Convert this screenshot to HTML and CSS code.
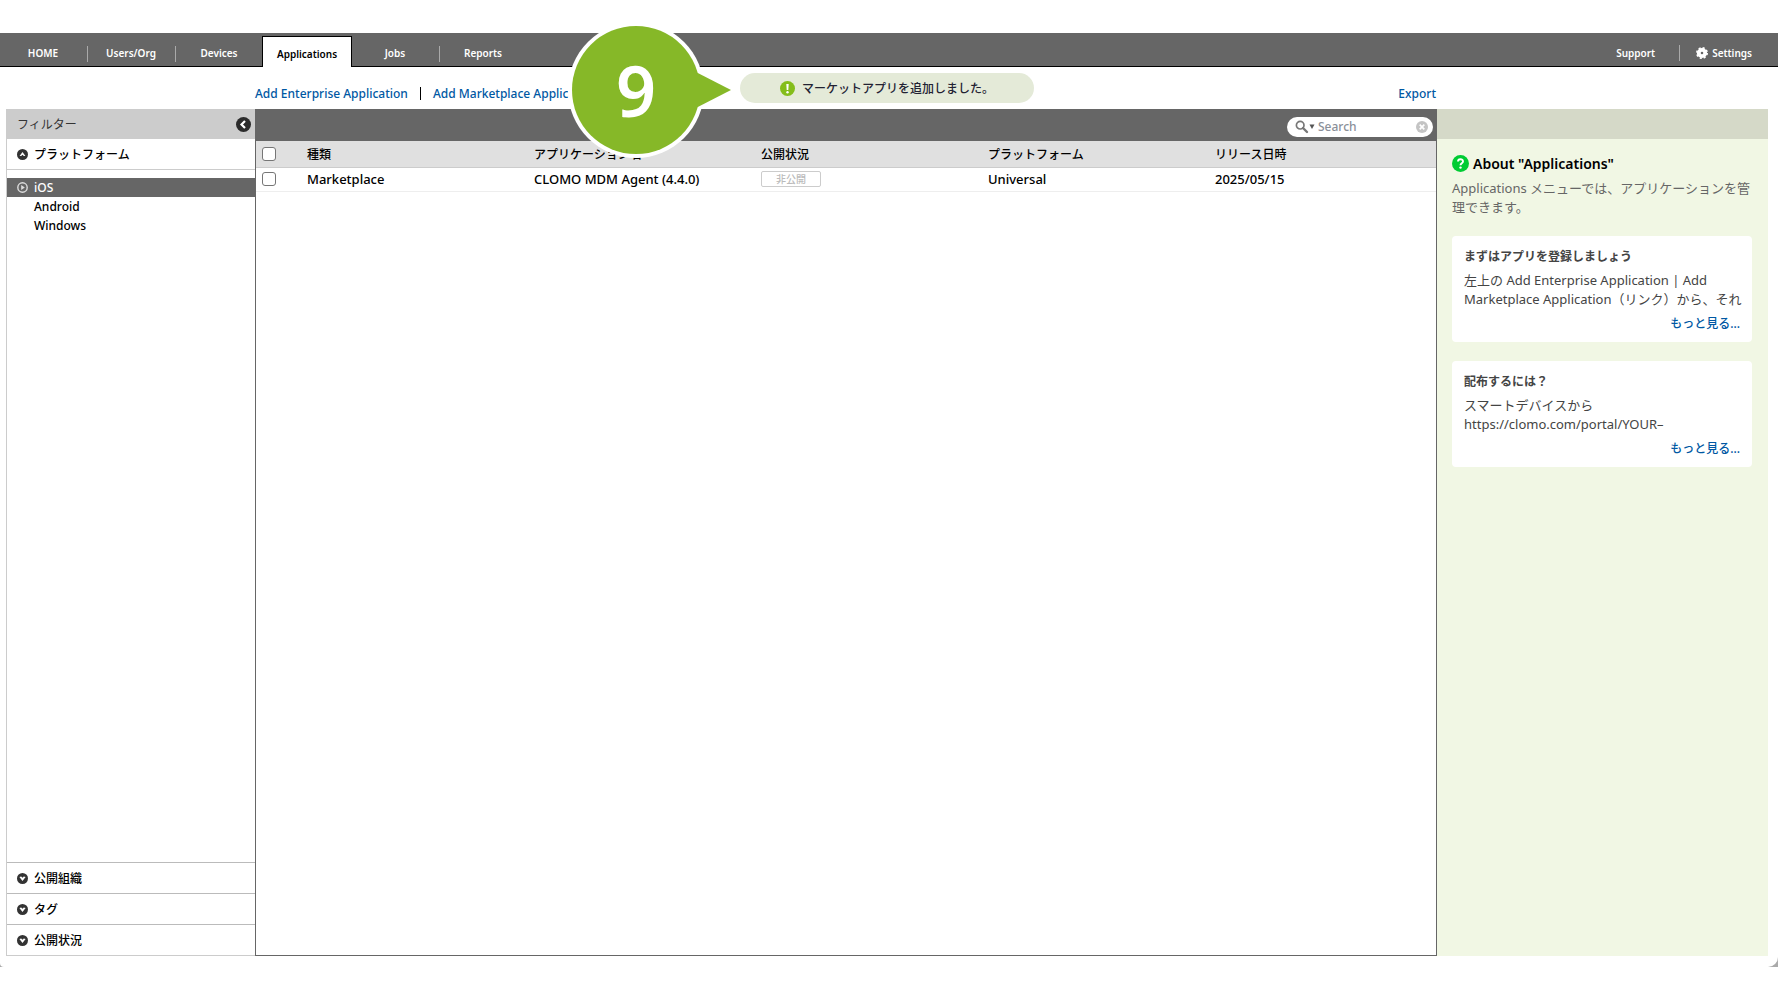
FILE: index.html
```
<!DOCTYPE html>
<html lang="ja">
<head>
    <meta charset="UTF-8">
    <meta name="viewport" content="width=device-width, initial-scale=1.0">
    <title>Applications</title>
    <link rel="stylesheet" href="styles.css">
</head>
<body>
    <div class="frame">
        <div class="window">
            <header class="topbar">
                <nav class="tabs">
                    <a href="#">HOME</a>
                    <a href="#">Users/Org</a>
                    <a href="#">Devices</a>
                    <a href="#" class="active">Applications</a>
                    <a href="#">Jobs</a>
                    <a href="#">Reports</a>
                </nav>
                <nav class="tools">
                    <a href="#">Support</a>
                    <a href="#" class="settings">
                        <svg width="12" height="12" viewBox="0 0 12 12">
                            <circle cx="6" cy="6" r="3.2" fill="none" stroke="#fff" stroke-width="3.8"/>
                            <circle cx="6" cy="6" r="5.2" fill="none" stroke="#fff" stroke-width="1.6" stroke-dasharray="2.1 1.98"/>
                        </svg>
                        Settings
                    </a>
                </nav>
            </header>

            <div class="actions">
                <div class="links">
                    <a href="#">Add Enterprise Application</a>
                    <span class="divider"></span>
                    <a href="#">Add Marketplace Application</a>
                </div>
                <a href="#">Export</a>
            </div>

            <div class="content">
                <aside class="filter">
                    <div class="filter-head">
                        <span>フィルター</span>
                        <button type="button" class="collapse" aria-label="閉じる">
                            <svg width="15" height="15" viewBox="0 0 15 15">
                                <circle cx="7.5" cy="7.5" r="7.5" fill="#2b2b2b"/>
                                <path d="M9 4L5.5 7.5L9 11" fill="none" stroke="#fff" stroke-width="2.2"/>
                            </svg>
                        </button>
                    </div>
                    <button type="button" class="section open">
                        <svg width="11" height="11" viewBox="0 0 11 11">
                            <circle cx="5.5" cy="5.5" r="5.5" fill="#333"/>
                            <path d="M2.6 7L5.5 3L8.4 7L6.8 7L5.5 5.8L4.2 7Z" fill="#fff"/>
                        </svg>
                        プラットフォーム
                    </button>
                    <ul class="platforms">
                        <li class="selected">
                            <a href="#">
                                <svg width="11" height="11" viewBox="0 0 11 11">
                                    <circle cx="5.5" cy="5.5" r="4.7" fill="none" stroke="#ddd" stroke-width="1.4"/>
                                    <path d="M4.2 3L7.8 5.5L4.2 8Z" fill="#ddd"/>
                                </svg>
                                iOS
                            </a>
                        </li>
                        <li><a href="#">Android</a></li>
                        <li><a href="#">Windows</a></li>
                    </ul>
                    <button type="button" class="section">
                        <svg width="11" height="11" viewBox="0 0 11 11">
                            <circle cx="5.5" cy="5.5" r="5.5" fill="#333"/>
                            <path d="M2.4 4L4.2 3.6L5.5 4.8L6.8 3.6L8.6 4L5.5 8Z" fill="#fff"/>
                        </svg>
                        公開組織
                    </button>
                    <button type="button" class="section">
                        <svg width="11" height="11" viewBox="0 0 11 11">
                            <circle cx="5.5" cy="5.5" r="5.5" fill="#333"/>
                            <path d="M2.4 4L4.2 3.6L5.5 4.8L6.8 3.6L8.6 4L5.5 8Z" fill="#fff"/>
                        </svg>
                        タグ
                    </button>
                    <button type="button" class="section">
                        <svg width="11" height="11" viewBox="0 0 11 11">
                            <circle cx="5.5" cy="5.5" r="5.5" fill="#333"/>
                            <path d="M2.4 4L4.2 3.6L5.5 4.8L6.8 3.6L8.6 4L5.5 8Z" fill="#fff"/>
                        </svg>
                        公開状況
                    </button>
                </aside>

                <main class="list">
                    <div class="list-bar">
                        <div class="search">
                            <svg width="20" height="14" viewBox="0 0 20 14">
                                <circle cx="5.2" cy="5.2" r="3.8" fill="none" stroke="#777" stroke-width="1.7"/>
                                <path d="M8 8L12 12" stroke="#777" stroke-width="2.4" stroke-linecap="round"/>
                                <path d="M14.5 4.5H19.5L17 9Z" fill="#555"/>
                            </svg>
                            <input type="text" placeholder="Search" aria-label="Search">
                            <button type="button" aria-label="Clear">
                                <svg width="12" height="12" viewBox="0 0 12 12">
                                    <circle cx="6" cy="6" r="6" fill="#c4c4c4"/>
                                    <path d="M3.7 3.7L8.3 8.3M8.3 3.7L3.7 8.3" stroke="#fff" stroke-width="1.7"/>
                                </svg>
                            </button>
                        </div>
                    </div>
                    <table>
                        <thead>
                            <tr>
                                <th class="check"><input type="checkbox" aria-label="すべて選択"></th>
                                <th class="col">種類</th>
                                <th class="col">アプリケーション名</th>
                                <th class="col">公開状況</th>
                                <th class="col">プラットフォーム</th>
                                <th>リリース日時</th>
                            </tr>
                        </thead>
                        <tbody>
                            <tr>
                                <td class="check"><input type="checkbox" aria-label="CLOMO MDM Agent"></td>
                                <td>Marketplace</td>
                                <td>CLOMO MDM Agent (4.4.0)</td>
                                <td><span class="status">非公開</span></td>
                                <td>Universal</td>
                                <td>2025/05/15</td>
                            </tr>
                        </tbody>
                    </table>
                </main>

                <aside class="help">
                    <div class="help-head"></div>
                    <div class="help-body">
                        <h2>
                            <svg width="17" height="17" viewBox="0 0 17 17">
                                <circle cx="8.5" cy="8.5" r="8.5" fill="#0c3"/>
                                <path d="M6 6.6C6 3.4 11 3.5 11 6.4C11 8.3 8.5 8.2 8.5 10.2" fill="none" stroke="#fff" stroke-width="1.9"/>
                                <circle cx="8.5" cy="12.6" r="1.2" fill="#fff"/>
                            </svg>
                            About "Applications"
                        </h2>
                        <p class="lead">Applications メニューでは、アプリケーションを管理できます。</p>
                        <section class="card">
                            <h3>まずはアプリを登録しましょう</h3>
                            <p>左上の Add Enterprise Application | Add<br>Marketplace Application（リンク）から、それ</p>
                            <a href="#">もっと見る...</a>
                        </section>
                        <section class="card">
                            <h3>配布するには？</h3>
                            <p>スマートデバイスから<br>https://clomo.com/portal/YOUR–</p>
                            <a href="#">もっと見る...</a>
                        </section>
                    </div>
                </aside>
            </div>

            <div class="toast" role="status">
                <svg width="15" height="15" viewBox="0 0 15 15">
                    <circle cx="7.5" cy="7.5" r="7.5" fill="#84bd1b"/>
                    <path d="M6.3 3H8.7L8.3 9H6.7Z" fill="#fff"/>
                    <circle cx="7.5" cy="11.2" r="1.2" fill="#fff"/>
                </svg>
                マーケットアプリを追加しました。
            </div>

            <div class="step">
                <svg width="168" height="136" viewBox="0 0 168 136">
                    <circle cx="68" cy="68" r="68" fill="#fff"/>
                    <path d="M120 46L160 68L120 90Z" fill="#fff" stroke="#fff" stroke-width="6"/>
                    <circle cx="68" cy="68" r="64" fill="#86b828"/>
                    <path d="M122 47L163 68L122 89Z" fill="#86b828"/>
                </svg>
                <span>9</span>
            </div>
        </div>
    </div>
</body>
</html>
```
FILE: styles.css
```
* {
    box-sizing: border-box;
}

body {
    margin: 0;
    min-height: 100vh;
    padding: 33px 0;
    display: flex;
    background: #fff;
    color: #000;
    font-family: "Noto Sans", "Noto Sans CJK JP", sans-serif;
    font-size: 12px;
    font-weight: 500;
}

a {
    color: #0058a3;
    text-decoration: none;
}

button {
    padding: 0;
    border: none;
    background: none;
    color: inherit;
    font: inherit;
    cursor: pointer;
}

svg {
    display: block;
    flex: none;
}

.frame {
    flex: 1;
    display: flex;
    min-width: 0;
    background: linear-gradient(#fff 50%, #aaa 50%);
}

.window {
    position: relative;
    flex: 1;
    display: flex;
    flex-direction: column;
    min-width: 0;
    padding-bottom: 11px;
    background: #fff;
    border-radius: 0 0 10px 4px;
}

/* Top navigation */
.topbar {
    display: flex;
    justify-content: space-between;
    height: 34px;
    background: #666;
    border-bottom: 1px solid #000;
    font-size: 10px;
    font-weight: 600;
    line-height: 16px;
}

.topbar a {
    color: #fff;
}

.tabs {
    display: flex;
    padding-top: 3px;
}

.tabs a {
    width: 88px;
    height: 31px;
    padding: 9px 2px 0 0;
    text-align: center;
    background: linear-gradient(#aaa, #aaa) right 10px / 1px 16px no-repeat;
}

.tabs a:nth-child(n+3):not(:nth-child(5)) {
    background: none;
}

.tabs .active {
    width: 90px;
    margin-left: -2px;
    padding-right: 0;
    border: 1px solid #000;
    border-bottom: none;
    background: #fff !important;
    color: #000;
}

.tools {
    display: flex;
    align-items: center;
    padding: 7px 26px 0 0;
}

.tools .settings {
    display: flex;
    align-items: center;
    gap: 4px;
    margin-left: 24px;
    padding-left: 16px;
    border-left: 1px solid #aaa;
}

/* Links over the list */
.actions {
    display: flex;
    justify-content: space-between;
    align-items: center;
    height: 42px;
    padding: 11px 342px 0 255px;
}

.links {
    display: flex;
    align-items: center;
}

.divider {
    width: 1px;
    height: 13px;
    margin: 0 12px;
    background: #000;
}

.content {
    flex: 1;
    display: flex;
    padding: 0 10px 0 6px;
}

/* Filter column */
.filter {
    display: flex;
    flex-direction: column;
    width: 249px;
    border: 1px solid #ccc;
    border-width: 0 0 1px 1px;
}

.filter-head {
    display: flex;
    justify-content: space-between;
    align-items: center;
    height: 30px;
    padding: 0 4px 0 10px;
    background: #ccc;
    color: #333;
    font-weight: 400;
}

.section {
    display: flex;
    align-items: center;
    gap: 6px;
    height: 31px;
    padding-left: 10px;
    border-top: 1px solid #bbb;
    text-align: left;
}

.section.open {
    border-top: none;
    border-bottom: 1px solid #ccc;
}

.platforms {
    flex: 1;
    margin: 0;
    padding: 8px 0 0;
    list-style: none;
    line-height: 19px;
}

.platforms a {
    display: flex;
    align-items: center;
    gap: 6px;
    padding-left: 27px;
    color: #000;
}

.platforms .selected a {
    padding-left: 10px;
    background: #666;
    color: #fff;
}

/* Application list */
.list {
    flex: 1;
    min-width: 0;
    border: 1px solid #666;
}

.list-bar {
    display: flex;
    justify-content: flex-end;
    align-items: center;
    height: 31px;
    padding: 2px 3px 0 0;
    background: #666;
}

.search {
    display: flex;
    align-items: center;
    width: 146px;
    height: 20px;
    padding: 0 5px 0 8px;
    border-radius: 10px;
    background: #fff;
}

.search input {
    flex: 1;
    min-width: 0;
    padding: 0 3px;
    border: none;
    outline: none;
    background: none;
    font: inherit;
}

.search input::placeholder {
    color: #8a8f99;
}

table {
    width: 100%;
    table-layout: fixed;
    border-collapse: collapse;
}

th, td {
    padding: 0;
    text-align: left;
    font-weight: 500;
}

th {
    height: 26px;
    background: #e0e0e0;
    border-bottom: 1px solid #ccc;
}

td {
    height: 24px;
    border-bottom: 1px solid #eee;
    font-size: 13px;
    line-height: 16px;
}

.col {
    width: 227px;
}

.check {
    width: 51px;
    padding-left: 6px;
}

.check input {
    display: block;
    appearance: none;
    width: 14px;
    height: 14px;
    margin: 0;
    border: 1px solid #767676;
    border-radius: 3px;
    background: #fff;
}

.status {
    display: block;
    width: 60px;
    border: 1px solid #ccc;
    border-radius: 2px;
    color: #bbb;
    font-size: 10px;
    line-height: 14px;
    text-align: center;
}

/* Help column */
.help {
    width: 331px;
    background: #f1f7e4;
}

.help-head {
    height: 30px;
    background: #d5d9c8;
}

.help-body {
    padding: 15px 16px 16px 15px;
    color: #666;
    line-height: 19px;
}

.help h2 {
    display: flex;
    align-items: center;
    gap: 4px;
    margin: 0 0 6px;
    color: #000;
    font-size: 14px;
    font-weight: 600;
}

.lead {
    margin: 0 0 19px;
    font-size: 13px;
    font-weight: 400;
}

.card {
    display: flex;
    flex-direction: column;
    gap: 5px;
    height: 106px;
    margin-bottom: 19px;
    padding: 11px 12px;
    border-radius: 4px;
    background: #fff;
    color: #444;
}

.card h3 {
    margin: 0;
    font-size: 12px;
    font-weight: 700;
}

.card p {
    margin: 0;
    font-size: 13px;
    font-weight: 400;
    white-space: nowrap;
}

.card a {
    align-self: flex-end;
}

/* Message and step marker over the page */
.toast {
    position: absolute;
    top: 40px;
    left: 50%;
    display: flex;
    justify-content: center;
    align-items: center;
    gap: 7px;
    width: 294px;
    height: 30px;
    margin-left: -149px;
    border-radius: 15px;
    background: #e4ead8;
    color: #223;
}

.step {
    position: absolute;
    top: -11px;
    left: 568px;
}

.step span {
    position: absolute;
    top: 0;
    left: 0;
    width: 136px;
    color: #fff;
    font-size: 70px;
    font-weight: 600;
    line-height: 136px;
    text-align: center;
}
```
